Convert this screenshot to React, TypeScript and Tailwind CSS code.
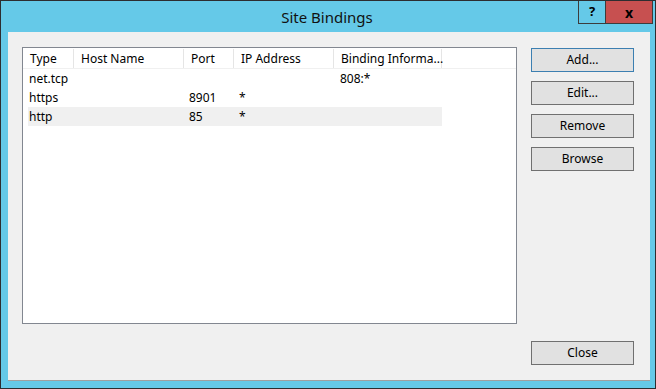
import React from "react";

const cols = [
  { label: "Type", w: "w-[51px]" },
  { label: "Host Name", w: "w-[110px]" },
  { label: "Port", w: "w-[50px]" },
  { label: "IP Address", w: "w-[100px]" },
  { label: "Binding Informa...", w: "w-[108px]" },
];

const rows = [
  ["net.tcp", "", "", "", "808:*"],
  ["https", "", "8901", "*", ""],
  ["http", "", "85", "*", ""],
];

function Btn({ label, focused }: { label: string; focused?: boolean }) {
  return (
    <button
      className={`w-[103px] h-[24px] bg-[#e1e1e1] border text-[12px] text-black flex items-center justify-center ${
        focused ? "border-[#3c7fb1]" : "border-[#707070]"
      }`}
    >
      {label}
    </button>
  );
}

export default function App() {
  return (
    <div
      className="w-[656px] h-[389px] bg-[#65c9e8] border border-[#2d2d30] flex flex-col text-black"
      style={{ fontFamily: '"Segoe UI", "Noto Sans", sans-serif' }}
    >
      {/* title bar */}
      <div className="h-[31px] flex items-start">
        <div className="flex-1" />
        <div className="pt-[5px] text-[15px] text-[#111]">Site Bindings</div>
        <div className="flex-1 flex justify-end pr-[2px]">
          <div className="flex h-[23px] border border-t-0 border-[#3c3c3c] bg-[#65c9e8]">
            <div className="w-[27px] flex items-center justify-center text-[13px] font-bold border-r border-[#3c3c3c]">?</div>
            <div className="w-[46px] bg-[#c75050] flex items-center justify-center text-[14px] font-bold text-black">x</div>
          </div>
        </div>
      </div>

      {/* client */}
      <div className="flex-1 flex flex-col pl-[7px] pr-[5px] pb-[7px]">
        <div className="flex-1 bg-[#f0f0f0] border-b border-[#a0a0a0] flex pt-[15px] pl-[14px] pr-[14px] pb-[55px]">
          {/* list */}
          <div className="w-[495px] h-[277px] bg-white border border-[#828790] pt-px">
            <div className="flex h-[20px] border-b border-[#f0f0f0]">
              {cols.map((c) => (
                <div
                  key={c.label}
                  className={`${c.w} border-r border-[#e5e5e5] pl-[7px] text-[12px] leading-[20px] whitespace-nowrap`}
                >
                  {c.label}
                </div>
              ))}
              <div className="flex-1" />
            </div>
            <div className="pl-[5px]">
              {rows.map((r, i) => (
                <div
                  key={i}
                  className={`flex h-[19px] w-[414px] text-[12px] leading-[19px] ${i === 2 ? "bg-[#f0f0f0]" : ""}`}
                >
                  <div className="w-[46px] pl-[1px]">{r[0]}</div>
                  <div className="w-[110px]">{r[1]}</div>
                  <div className="w-[50px] pl-[5px]">{r[2]}</div>
                  <div className="w-[100px] pl-[5px]">{r[3]}</div>
                  <div className="w-[108px] pl-[6px]">{r[4]}</div>
                </div>
              ))}
            </div>
          </div>

          {/* buttons */}
          <div className="ml-[14px] flex flex-col justify-between">
            <div className="pt-px flex flex-col gap-[9px]">
              <Btn label="Add..." focused />
              <Btn label="Edit..." />
              <Btn label="Remove" />
              <Btn label="Browse" />
            </div>
            <div className="-mb-[40px]">
              <Btn label="Close" />
            </div>
          </div>
        </div>
      </div>
    </div>
  );
}
